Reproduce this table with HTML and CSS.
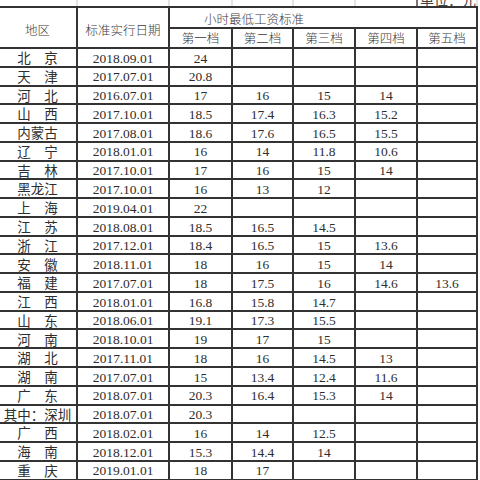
FILE: index.html
```html
<!DOCTYPE html>
<html lang="zh-CN">
<head>
<meta charset="utf-8">
<title>小时最低工资标准</title>
<link rel="stylesheet" href="styles.css">
</head>
<body>
<div class="sheet">
  <div class="strip">
    <div></div><div></div><div></div><div></div><div></div><div></div>
    <div class="unit">单位：元</div>
  </div>
  <div class="grid">
    <div class="cn head tall">地区</div>
    <div class="cn head tall">标准实行日期</div>
    <div class="cn head span">小时最低工资标准</div>
    <div class="cn head">第一档</div>
    <div class="cn head">第二档</div>
    <div class="cn head">第三档</div>
    <div class="cn head">第四档</div>
    <div class="cn head">第五档</div>

    <div class="cn">北　京</div><div>2018.09.01</div><div>24</div><div></div><div></div><div></div><div></div>
    <div class="cn">天　津</div><div>2017.07.01</div><div>20.8</div><div></div><div></div><div></div><div></div>
    <div class="cn">河　北</div><div>2016.07.01</div><div>17</div><div>16</div><div>15</div><div>14</div><div></div>
    <div class="cn">山　西</div><div>2017.10.01</div><div>18.5</div><div>17.4</div><div>16.3</div><div>15.2</div><div></div>
    <div class="cn">内蒙古</div><div>2017.08.01</div><div>18.6</div><div>17.6</div><div>16.5</div><div>15.5</div><div></div>
    <div class="cn">辽　宁</div><div>2018.01.01</div><div>16</div><div>14</div><div>11.8</div><div>10.6</div><div></div>
    <div class="cn">吉　林</div><div>2017.10.01</div><div>17</div><div>16</div><div>15</div><div>14</div><div></div>
    <div class="cn">黑龙江</div><div>2017.10.01</div><div>16</div><div>13</div><div>12</div><div></div><div></div>
    <div class="cn">上　海</div><div>2019.04.01</div><div>22</div><div></div><div></div><div></div><div></div>
    <div class="cn">江　苏</div><div>2018.08.01</div><div>18.5</div><div>16.5</div><div>14.5</div><div></div><div></div>
    <div class="cn">浙　江</div><div>2017.12.01</div><div>18.4</div><div>16.5</div><div>15</div><div>13.6</div><div></div>
    <div class="cn">安　徽</div><div>2018.11.01</div><div>18</div><div>16</div><div>15</div><div>14</div><div></div>
    <div class="cn">福　建</div><div>2017.07.01</div><div>18</div><div>17.5</div><div>16</div><div>14.6</div><div>13.6</div>
    <div class="cn">江　西</div><div>2018.01.01</div><div>16.8</div><div>15.8</div><div>14.7</div><div></div><div></div>
    <div class="cn">山　东</div><div>2018.06.01</div><div>19.1</div><div>17.3</div><div>15.5</div><div></div><div></div>
    <div class="cn">河　南</div><div>2018.10.01</div><div>19</div><div>17</div><div>15</div><div></div><div></div>
    <div class="cn">湖　北</div><div>2017.11.01</div><div>18</div><div>16</div><div>14.5</div><div>13</div><div></div>
    <div class="cn">湖　南</div><div>2017.07.01</div><div>15</div><div>13.4</div><div>12.4</div><div>11.6</div><div></div>
    <div class="cn">广　东</div><div>2018.07.01</div><div>20.3</div><div>16.4</div><div>15.3</div><div>14</div><div></div>
    <div class="cn">其中：深圳</div><div>2018.07.01</div><div>20.3</div><div></div><div></div><div></div><div></div>
    <div class="cn">广　西</div><div>2018.02.01</div><div>16</div><div>14</div><div>12.5</div><div></div><div></div>
    <div class="cn">海　南</div><div>2018.12.01</div><div>15.3</div><div>14.4</div><div>14</div><div></div><div></div>
    <div class="cn">重　庆</div><div>2019.01.01</div><div>18</div><div>17</div><div></div><div></div><div></div>
  </div>
</div>
</body>
</html>
```

FILE: styles.css
```css
html, body {
  margin: 0;
  padding: 0;
  background: #ffffff;
}

body {
  width: 480px;
  height: 480px;
  overflow: hidden;
  color: #2e2e2e;
  font-family: "Liberation Serif", serif;
}

.sheet {
  margin-left: -3px;
  width: 481px;
}

.strip {
  display: grid;
  grid-template-columns: 77px 90px 61px 59px 60px 60px 58px;
  column-gap: 2px;
  padding: 0 2px;
  height: 6px;
  background: #e4e4e4;
}

.strip > div {
  background: #ffffff;
  overflow: hidden;
}

.strip .unit {
  display: flex;
  align-items: flex-end;
  justify-content: flex-end;
  font-family: "Noto Sans CJK SC", sans-serif;
  font-size: 14px;
  line-height: 14px;
  color: #444444;
  box-shadow: -2px 0 0 #777777;
}

.grid {
  display: grid;
  grid-template-columns: 77px 90px 61px 59px 60px 60px 58px;
  grid-template-rows: 19px 18px repeat(23, 16.78px);
  gap: 2px;
  padding: 2px;
  background: #333333;
}

.grid > div {
  background: #ffffff;
  display: flex;
  align-items: center;
  justify-content: center;
  white-space: nowrap;
  font-family: "Liberation Serif", serif;
  font-size: 13.5px;
  line-height: 1;
  padding-top: 2px;
}

.grid > .cn {
  font-family: "Noto Sans CJK SC", sans-serif;
  font-size: 13.5px;
  font-weight: 400;
  padding-top: 1px;
}

.grid > .head {
  font-size: 12.5px;
  font-weight: 300;
  color: #3a3a3a;
}

.grid > .tall {
  grid-row: 1 / 3;
  padding-top: 6px;
}

.grid > .span {
  grid-column: 3 / 8;
  justify-content: flex-start;
  padding-left: 34px;
  padding-top: 3px;
}
```
